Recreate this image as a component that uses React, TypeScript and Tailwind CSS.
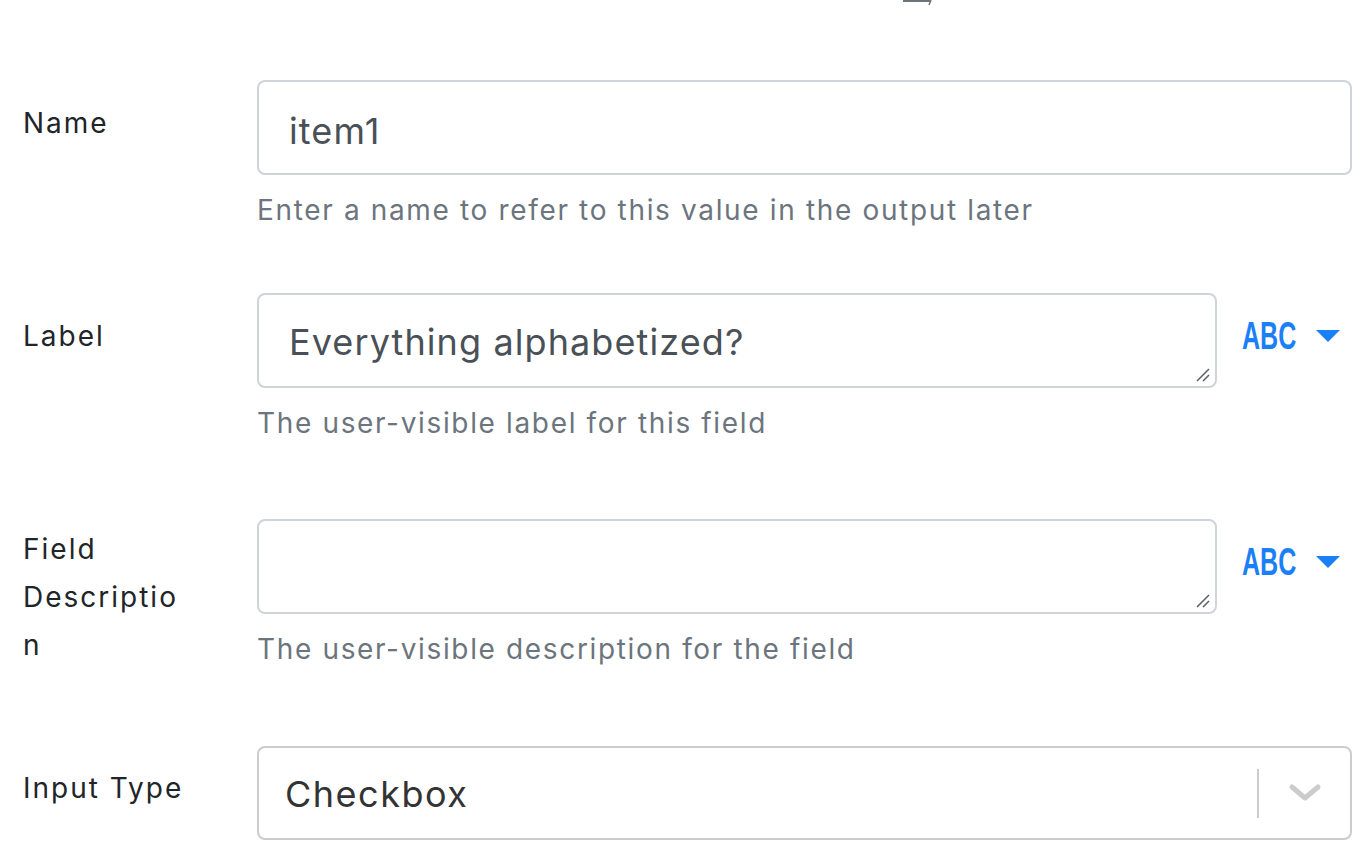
import React from 'react';

const Helper: React.FC<{ text: string }> = ({ text }) => (
  <p className="mt-[15px] text-[28px] leading-[40px] tracking-[1.65px] text-[#6c757d]">{text}</p>
);

const ResizeGrip: React.FC = () => (
  <svg className="absolute right-[5px] bottom-[4px]" width="14" height="14" viewBox="0 0 14 14">
    <line x1="1" y1="13" x2="13" y2="1" stroke="#5f6368" strokeWidth="1.6" />
    <line x1="7" y1="13" x2="13" y2="7" stroke="#5f6368" strokeWidth="1.6" />
  </svg>
);

const TypeToggle: React.FC = () => (
  <div className="flex items-center gap-[19px] pt-[27px] pl-[25px]">
    <span className="inline-block origin-left scale-x-[0.66] w-[55px] text-[38px] leading-[32px] font-bold font-['Liberation_Sans',sans-serif] text-[#1b7ff6]">
      ABC
    </span>
    <svg width="24" height="12" viewBox="0 0 24 12">
      <polygon points="0,0 24,0 12,12" fill="#1b7ff6" />
    </svg>
  </div>
);

const App: React.FC = () => {
  return (
    <div className="w-[1368px] h-[866px] overflow-hidden bg-white font-['Inter',sans-serif] text-[#212529]">
      <div className="h-[80px]">
        <svg className="ml-[901px]" width="34" height="6" viewBox="0 0 34 6">
          <path d="M2 1 H29" stroke="#6c757d" strokeWidth="2" />
          <path d="M30 0 L28 5" stroke="#6c757d" strokeWidth="1.5" />
        </svg>
      </div>

      {/* Name */}
      <div className="grid grid-cols-[257px_1fr] items-start">
        <label className="pl-[23px] pt-[19px] text-[28px] leading-[48px] tracking-[2px]">Name</label>
        <div className="w-[1095px]">
          <div className="h-[95px] rounded-[8px] border-2 border-[#ced4da] flex items-center pl-[30px] pt-[6px] text-[36px] tracking-[1.1px] text-[#495057]">
            item1
          </div>
          <Helper text="Enter a name to refer to this value in the output later" />
        </div>
      </div>

      {/* Label */}
      <div className="mt-[63px] grid grid-cols-[257px_1fr] items-start">
        <label className="pl-[23px] pt-[19px] text-[28px] leading-[48px] tracking-[2px]">Label</label>
        <div>
          <div className="flex items-start">
            <div className="relative w-[960px] h-[95px] rounded-[8px] border-2 border-[#ced4da] flex items-center pl-[30px] pt-[3px] text-[36px] tracking-[1.1px] text-[#495057]">
              Everything alphabetized?
              <ResizeGrip />
            </div>
            <TypeToggle />
          </div>
          <Helper text="The user-visible label for this field" />
        </div>
      </div>

      {/* Field Description */}
      <div className="mt-[76px] grid grid-cols-[257px_1fr] items-start">
        <label className="pl-[23px] pt-[6px] w-[188px] text-[28px] leading-[48px] tracking-[2px] [overflow-wrap:break-word]">
          Field Description
        </label>
        <div>
          <div className="flex items-start">
            <div className="relative w-[960px] h-[95px] rounded-[8px] border-2 border-[#ced4da]">
              <ResizeGrip />
            </div>
            <TypeToggle />
          </div>
          <Helper text="The user-visible description for the field" />
        </div>
      </div>

      {/* Input Type */}
      <div className="mt-[77px] grid grid-cols-[257px_1fr] items-start">
        <label className="pl-[23px] pt-[18px] text-[28px] leading-[48px] tracking-[2px]">Input Type</label>
        <div className="w-[1095px] h-[94px] rounded-[8px] border-2 border-[#cccccc] flex items-center">
          <span className="flex-1 pl-[26px] pt-[2px] text-[36px] tracking-[1.5px] text-[#333333]">Checkbox</span>
          <span className="w-[2px] h-[49px] bg-[#cccccc]" />
          <span className="w-[91px] flex justify-center">
            <svg width="34" height="20" viewBox="0 0 34 20">
              <path d="M4 4 L17 15 L30 4" fill="none" stroke="#cccccc" strokeWidth="5" strokeLinecap="round" strokeLinejoin="round" />
            </svg>
          </span>
        </div>
      </div>
    </div>
  );
};

export default App;
